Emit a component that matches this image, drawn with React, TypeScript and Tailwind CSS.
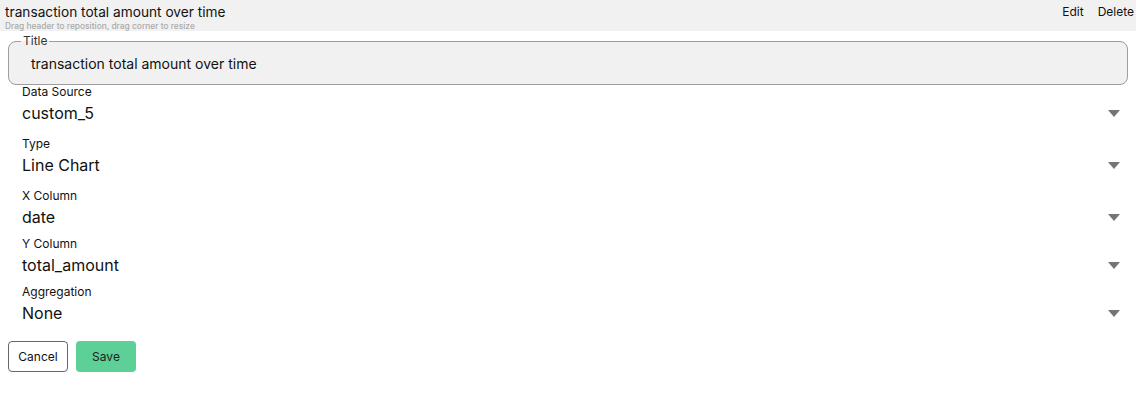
import React from 'react';

interface Field {
  label: string;
  value: string;
  gap: string;
}

const fields: Field[] = [
  { label: 'Data Source', value: 'custom_5', gap: 'mt-0' },
  { label: 'Type', value: 'Line Chart', gap: 'mt-[14px]' },
  { label: 'X Column', value: 'date', gap: 'mt-[14px]' },
  { label: 'Y Column', value: 'total_amount', gap: 'mt-[10px]' },
  { label: 'Aggregation', value: 'None', gap: 'mt-[10px]' },
];

const Caret: React.FC = () => (
  <svg width="12" height="7" viewBox="0 0 12 7" className="shrink-0">
    <path d="M0 0 H12 L6 7 Z" fill="#757575" />
  </svg>
);

const App: React.FC = () => {
  return (
    <div className="w-[1136px] h-[410px] bg-white text-[#111] font-['Inter','Liberation_Sans',sans-serif]">
      <header className="h-[31px] bg-[#f1f1f1] flex justify-between pl-[5px] pr-[2px]">
        <div className="pt-[3px]">
          <div className="text-[13.7px] leading-[18px] text-[#111]">transaction total amount over time</div>
          <div className="text-[8.4px] leading-[10px] font-medium text-[#aaaaaa]">Drag header to reposition, drag corner to resize</div>
        </div>
        <div className="flex gap-[14px] pt-[4px] text-[12px] leading-[16px] text-[#111]">
          <span>Edit</span>
          <span>Delete</span>
        </div>
      </header>

      <div className="px-2 pt-[3px]">
        <fieldset className="h-[51px] border border-[#9e9e9e] rounded-lg bg-[#f1f1f1] pl-[22px] pr-3">
          <legend className="text-[12px] leading-[14px] text-[#333] px-[2px] -ml-[10px]">Title</legend>
          <div className="text-[14px] leading-[18px] pt-[7px] text-[#111]">transaction total amount over time</div>
        </fieldset>

        <div className="pl-[14px] pr-[8px]">
          {fields.map((f) => (
            <div key={f.label} className={f.gap}>
              <div className="text-[12px] leading-[14px] text-[#111]">{f.label}</div>
              <div className="flex items-center justify-between mt-[4px]">
                <span className="text-[16px] leading-[20px] text-[#111]">{f.value}</span>
                <Caret />
              </div>
            </div>
          ))}
        </div>

        <div className="flex gap-2 mt-[18px]">
          <button className="w-[60px] h-[31px] border border-[#666] rounded-[4px] bg-white text-[12px] text-[#111]">Cancel</button>
          <button className="w-[60px] h-[31px] rounded-[4px] bg-[#5cd096] text-[12px] text-[#222]">Save</button>
        </div>
      </div>
    </div>
  );
};

export default App;
